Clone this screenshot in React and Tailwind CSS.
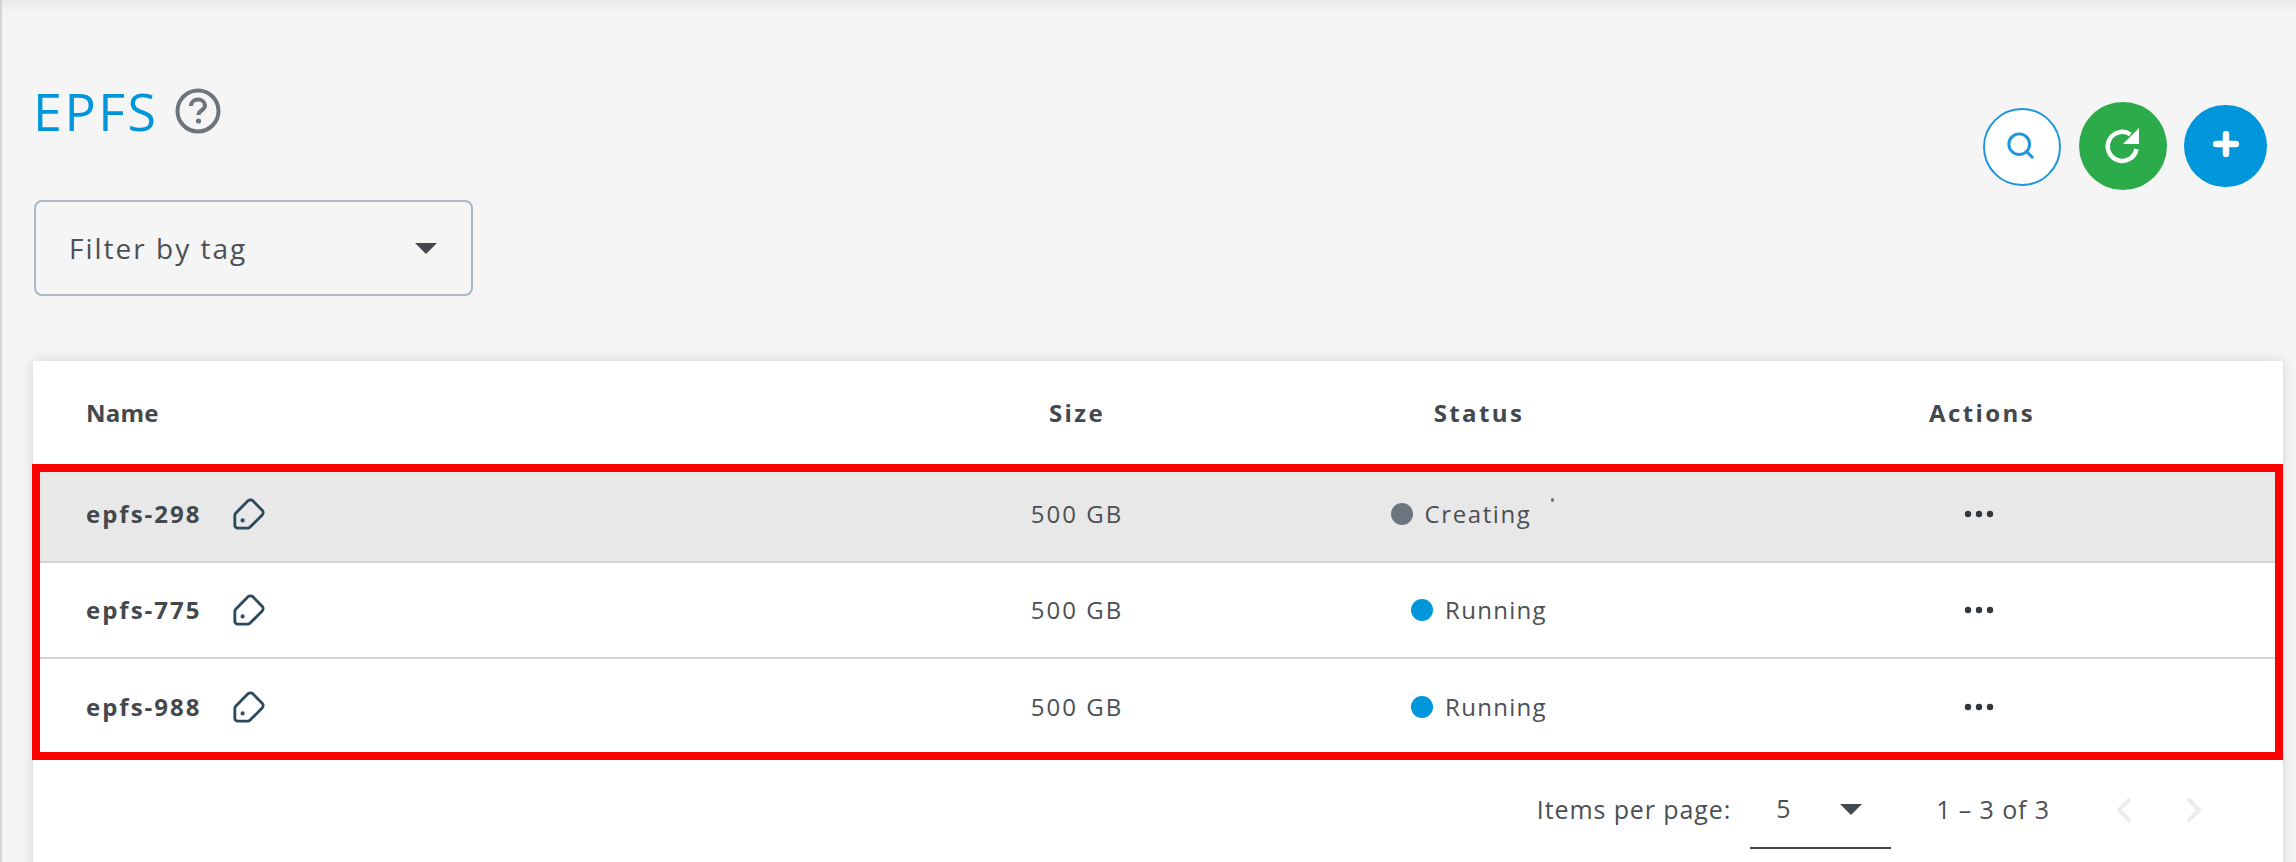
import React from 'react';
import { Tag, Search, ChevronLeft, ChevronRight } from 'lucide-react';

const rows = [
    { name: 'epfs-298', status: 'Creating', active: true },
    { name: 'epfs-775', status: 'Running' },
    { name: 'epfs-988', status: 'Running' },
];

const cols = 'grid grid-cols-[847px_394px_410px_599px]';

function Caret({ className }) {
    return <span className={`block w-0 h-0 border-x-[11px] border-x-transparent border-t-[11px] border-t-[#43484d] ${className || ''}`} />;
}

function Dots() {
    return (
        <svg width="30" height="8" viewBox="0 0 30 8" className="text-[#33383c]">
            <circle cx="4" cy="4" r="3.2" fill="currentColor" />
            <circle cx="15" cy="4" r="3.2" fill="currentColor" />
            <circle cx="26" cy="4" r="3.2" fill="currentColor" />
        </svg>
    );
}

function Row({ row, last }) {
    const running = row.status === 'Running';
    return (
        <div className={`${cols} items-center h-[96px] ${last ? '' : 'border-b-2 border-[#d2d2d2]'} ${row.active ? 'bg-[#e8e8e8]' : 'bg-white'}`}>
            <div className="flex items-center pl-[53px]">
                <span className="w-[115px] whitespace-nowrap text-[24px] font-bold text-[#43484d] tracking-[2px]">{row.name}</span>
                <Tag size={34} strokeWidth={2} className="ml-[31px] -rotate-90 text-[#2b4a5b]" />
            </div>
            <div className="text-center text-[24px] text-[#4b5054] tracking-[2px]">500 GB</div>
            <div className={`flex items-center justify-center gap-[12px] text-[24px] text-[#4b5054] ${running ? 'tracking-[1.3px]' : 'tracking-[1.6px]'}`}>
                <span className={`w-[22px] h-[22px] rounded-full ${running ? 'bg-[#0096db]' : 'bg-[#6c757d]'}`} />
                <span>{row.status}</span>
                {!running && (
                    <span className="relative w-[24px] h-[22px]">
                        <span className="absolute left-[8px] -top-[5px] w-[3px] h-[4px] bg-[#6c757d] rounded-full" />
                    </span>
                )}
            </div>
            <div className="flex justify-center pr-[9px]"><Dots /></div>
        </div>
    );
}

export default function App() {
    return (
        <div className="h-[862px] overflow-hidden bg-[#f5f5f5] border-l-2 border-[#d4d4d4] font-['Open_Sans','Liberation_Sans',sans-serif]">
            <div className="h-[12px] bg-gradient-to-b from-[#e9e9e9] to-[#f5f5f5]" />
            <div className="flex justify-between pl-[31px] pr-[29px] pt-[76px]">
                <div className="flex items-center h-[46px]">
                    <h1 className="text-[52px] leading-none text-[#0096db] tracking-[2.500px]">EPFS</h1>
                    <svg width="46" height="46" viewBox="0 0 46 46" className="ml-[16px] text-[#6c757d]">
                        <circle cx="23" cy="23" r="20.5" fill="none" stroke="currentColor" strokeWidth="4" />
                        <path d="M16 18c0-4 3.200-6.500 7-6.500s7 2.500 7 6c0 5-6.500 4.500-6.500 9.500" fill="none" stroke="currentColor" strokeWidth="4" />
                        <circle cx="23.500" cy="33" r="2.600" fill="currentColor" />
                    </svg>
                </div>
                <div className="flex items-center gap-[17px] mt-[14px] h-[88px]">
                    <button className="w-[78px] h-[78px] mt-[2px] mr-[1px] rounded-full bg-white border-2 border-[#1f96dc] flex items-center justify-center text-[#1f96dc]">
                        <Search size={31} strokeWidth={2.3} className="-translate-x-[2px] -translate-y-[2px]" />
                    </button>
                    <button className="w-[88px] h-[88px] rounded-full bg-[#2bab4a] flex items-center justify-center">
                        <svg width="40" height="40" viewBox="0 0 40 40">
                            <path d="M33.500 23a14.500 14.500 0 1 1-6-14.500" fill="none" stroke="#fff" strokeWidth="4.500" />
                            <path d="M36 2v16H20z" fill="#fff" />
                        </svg>
                    </button>
                    <button className="w-[83px] h-[82px] rounded-full bg-[#0096db] flex items-center justify-center">
                        <svg width="26" height="26" viewBox="0 0 26 26" className="-translate-y-[2px]">
                            <path d="M13 3v20M3 13h20" fill="none" stroke="#fff" strokeWidth="6.500" strokeLinecap="round" />
                        </svg>
                    </button>
                </div>
            </div>
            <div className="ml-[32px] mt-[10px] w-[439px] h-[96px] rounded-[8px] border-2 border-[#a9bac3] flex items-center justify-between pl-[33px] pr-[34px]">
                <span className="text-[28px] text-[#4b5054] tracking-[2px]">Filter by tag</span>
                <Caret />
            </div>

            <div className="relative ml-[31px] mt-[65px] pb-[60px] w-[2250px] bg-white shadow-[0_0_12px_rgba(0,0,0,0.14)]">
                <div className={`${cols} items-center h-[106px] pb-[2px] text-[24px] font-bold text-[#43484d] tracking-[2.400px]`}>
                    <div className="pl-[53px] tracking-[0.2px]">Name</div>
                    <div className="text-center">Size</div>
                    <div className="text-center">Status</div>
                    <div className="text-center pr-[3px]">Actions</div>
                </div>
                <div>
                    {rows.map((r, i) => <Row key={r.name} row={r} last={i === rows.length - 1} />)}
                </div>
                <div className="flex items-center justify-end h-[98px] mt-[6px] pr-[69px] text-[25px] text-[#4b5054] tracking-[0.9px]">
                    <span>Items per page:</span>
                    <div className="relative ml-[19px] w-[141px] h-[78px] border-b-2 border-[#43484d] flex items-center justify-between pl-[26px] pr-[29px]">
                        <span>5</span>
                        <Caret />
                    </div>
                    <span className="ml-[45px]">1 – 3 of 3</span>
                    <ChevronLeft size={40} strokeWidth={2.5} className="ml-[54px] text-[#ececec]" />
                    <ChevronRight size={40} strokeWidth={2.5} className="ml-[30px] text-[#ececec]" />
                </div>
                <div className="absolute left-[-1px] right-0 top-[103px] h-[296px] border-[8px] border-[#ff0000] pointer-events-none" />
            </div>
        </div>
    );
}
